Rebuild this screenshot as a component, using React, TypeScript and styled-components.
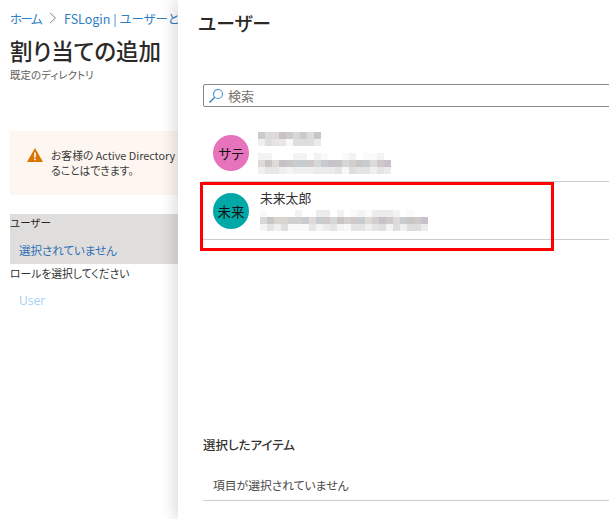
import React from "react";
import styled, { createGlobalStyle } from "styled-components";

const Global = createGlobalStyle`
  html, body { margin: 0; padding: 0; background: #fff; overflow: hidden; }
  * { box-sizing: border-box; }
  body {
    font-family: "Noto Sans CJK JP", "Noto Sans", sans-serif;
    font-feature-settings: "palt";
    color: #323130;
  }
`;

// mosaic colours for the blurred out names and mail addresses, by strength
const STRONG = ["#d2cfcf", "#c9c6c6", "#d8d4cf", "#c8ccd0", "#dcdbd9", "#c9c1c9", "#d5d8d8", "#cfcaca"];
const LIGHT = ["#f4f4f4", "#ebebeb", "#e4e4e6", "#f0efef", "#dededf", "#f8f8f8", "#e8e6e4"];
const SPARSE = ["#fff", "#fff", "#fff", "#f3f3f3", "#fafafa", "#ececec", "#fff"];
const LEVELS = [STRONG, LIGHT, SPARSE];

const pick = (seed: number, x: number, y: number, size: number) => {
  const v = Math.sin(seed * 12.9 + x * 78.2 + y * 37.7) * 43758.5;
  return Math.floor((v - Math.floor(v)) * size);
};

const Mosaic: React.FC<{ seed: number; cols: number; levels: number[] }> = ({ seed, cols, levels }) => (
  <svg width={cols * 7} height={levels.length * 7} style={{ display: "block" }}>
    {levels.flatMap((level, y) =>
      Array.from({ length: cols }, (_, x) => {
        const tones = LEVELS[level];
        return <rect key={`${x}-${y}`} x={x * 7} y={y * 7} width={7} height={7} fill={tones[pick(seed, x, y, tones.length)]} />;
      })
    )}
  </svg>
);

const App: React.FC = () => (
  <Page>
    <Global />
    <Blade>
      <Crumbs>
        <HomeLink>ホーム</HomeLink>
        <Chevron viewBox="0 0 8 12"><path d="M1 1l5.5 5L1 11" fill="none" stroke="#8a8886" strokeWidth="1" /></Chevron>
        <CrumbLink>FSLogin | ユーザーとグループ</CrumbLink>
      </Crumbs>
      <Title>割り当ての追加</Title>
      <Sub>既定のディレクトリ</Sub>
      <Alert>
        <AlertIcon viewBox="0 0 16 14">
          <path d="M8 0l8 14H0z" fill="#db7500" />
          <path d="M7.2 4.6h1.6v5H7.2zM7.2 10.6h1.6v1.6H7.2z" fill="#fff" />
        </AlertIcon>
        <AlertText>
          <span>お客様の Active Directory プラン</span>
          <span>ることはできます。</span>
        </AlertText>
      </Alert>
      <UserField>
        <FieldLabel>ユーザー</FieldLabel>
        <FieldValue>選択されていません</FieldValue>
      </UserField>
      <RoleLabel>ロールを選択してください</RoleLabel>
      <RoleValue>User</RoleValue>
    </Blade>
    <Panel>
      <PanelTitle>ユーザー</PanelTitle>
      <Search>
        <svg width="16" height="16" viewBox="0 0 16 16">
          <circle cx="10" cy="6" r="4.5" fill="none" stroke="#4a90d0" strokeWidth="1.1" />
          <path d="M6.6 9.4L1.5 14.5" stroke="#1f78c8" strokeWidth="1.3" />
        </svg>
        <span>検索</span>
      </Search>
      <Results>
        <Row>
          <Avatar $bg="#e773bd">サテ</Avatar>
          <Blurred>
            <Mosaic seed={7} cols={9} levels={[0, 1]} />
            <Mosaic seed={23} cols={19} levels={[2, 0, 1]} />
          </Blurred>
        </Row>
        <Row>
          <Avatar $bg="#00a8a8">未来</Avatar>
          <Info>
            <Name>未来太郎</Name>
            <Mosaic seed={41} cols={24} levels={[2, 0, 1]} />
          </Info>
        </Row>
        <Highlight />
      </Results>
      <Selected>
        <SelectedTitle>選択したアイテム</SelectedTitle>
        <SelectedEmpty>項目が選択されていません</SelectedEmpty>
      </Selected>
    </Panel>
  </Page>
);

const Page = styled.div`
  display: flex;
  width: 609px;
  height: 519px;
  overflow: hidden;
`;

const Blade = styled.div`
  width: 178px;
  flex: none;
  padding: 9px 0 0 10px;
  overflow: hidden;
  white-space: nowrap;
`;

const Crumbs = styled.div`
  display: flex;
  align-items: center;
  height: 18px;
  font-size: 12.5px;
  color: #2f7fc6;
  overflow: hidden;
`;

const HomeLink = styled.a`
  flex: none;
  width: 31px;
  letter-spacing: -1.6px;
`;

const CrumbLink = styled.a`
  min-width: 0;
  overflow: hidden;
`;

const Chevron = styled.svg`
  flex: none;
  width: 8px;
  height: 12px;
  margin: 0 7px 0 8px;
`;

const Title = styled.h1`
  margin: 8px 0 0;
  font-size: 22.5px;
  line-height: 30px;
  font-weight: 500;
  color: #2b2a29;
`;

const Sub = styled.div`
  font-size: 10.5px;
  line-height: 16px;
  margin-top: 2px;
  color: #605e5c;
`;

const Alert = styled.div`
  display: flex;
  gap: 8px;
  height: 64px;
  margin-top: 48px;
  padding: 17px 0 0 17px;
  background: #fef7f1;
  overflow: hidden;
`;

const AlertIcon = styled.svg`
  flex: none;
  width: 16px;
  height: 14px;
`;

const AlertText = styled.div`
  display: flex;
  flex-direction: column;
  min-width: 0;
  font-size: 10.8px;
  line-height: 15px;
  color: #3b3a39;
`;

const UserField = styled.div`
  margin-top: 19px;
  height: 50px;
  background: #e0dedd;
`;

const FieldLabel = styled.div`
  font-size: 10.5px;
  line-height: 18px;
  color: #252423;
`;

const FieldValue = styled.div`
  margin: 9px 0 0 9px;
  font-size: 11.5px;
  line-height: 18px;
  color: #2f6fb5;
`;

const RoleLabel = styled.div`
  font-size: 10.8px;
  line-height: 18px;
  color: #323130;
`;

const RoleValue = styled.div`
  margin: 10px 0 0 9px;
  font-family: "Open Sans", sans-serif;
  font-size: 12px;
  line-height: 18px;
  color: #a6d0f3;
`;

const Panel = styled.div`
  position: relative;
  z-index: 1;
  flex: 1;
  display: flex;
  flex-direction: column;
  padding-left: 20px;
  background: #fff;
  box-shadow: -4px 0 14px rgba(0, 0, 0, 0.14);
`;

const PanelTitle = styled.h2`
  margin: 8px 0 0;
  font-size: 18.8px;
  line-height: 30px;
  font-weight: 500;
  color: #2b2a29;
`;

const Search = styled.div`
  display: flex;
  align-items: center;
  gap: 4px;
  height: 23px;
  margin: 46px -12px 0 5px;
  padding-left: 4px;
  border: 1px solid #8a8886;
  border-radius: 2px;
  font-size: 13px;
  color: #77736f;
`;

const Results = styled.div`
  position: relative;
  margin: 17px -12px 0 5px;
`;

const Row = styled.div`
  display: flex;
  align-items: flex-start;
  gap: 9px;
  height: 58px;
  padding: 11px 0 0 10px;
  border-bottom: 1px solid #cfcdcc;
`;

const Avatar = styled.div<{ $bg: string }>`
  width: 36px;
  height: 36px;
  flex: none;
  display: flex;
  align-items: center;
  justify-content: center;
  border-radius: 50%;
  background: ${(p) => p.$bg};
  font-size: 13.5px;
  color: #111;
`;

const Blurred = styled.div`
  display: flex;
  flex-direction: column;
  gap: 7px;
  margin-top: -3px;
`;

const Info = styled.div`
  margin: -4px 0 0 2px;
`;

const Name = styled.div`
  font-size: 12.8px;
  line-height: 18px;
  margin-bottom: 3px;
  color: #323130;
`;

const Highlight = styled.div`
  position: absolute;
  left: -3px;
  top: 58px;
  width: 354px;
  height: 69px;
  border: 3px solid #ff0000;
`;

const Selected = styled.div`
  margin: auto -12px 18px 5px;
`;

const SelectedTitle = styled.div`
  font-size: 12.5px;
  line-height: 18px;
  font-weight: 500;
  color: #323130;
`;

const SelectedEmpty = styled.div`
  height: 38px;
  padding: 13px 0 0 10px;
  margin-top: 9px;
  font-size: 11.8px;
  line-height: 18px;
  color: #4a4846;
  border-bottom: 1px solid #cfcdcc;
`;

export default App;
